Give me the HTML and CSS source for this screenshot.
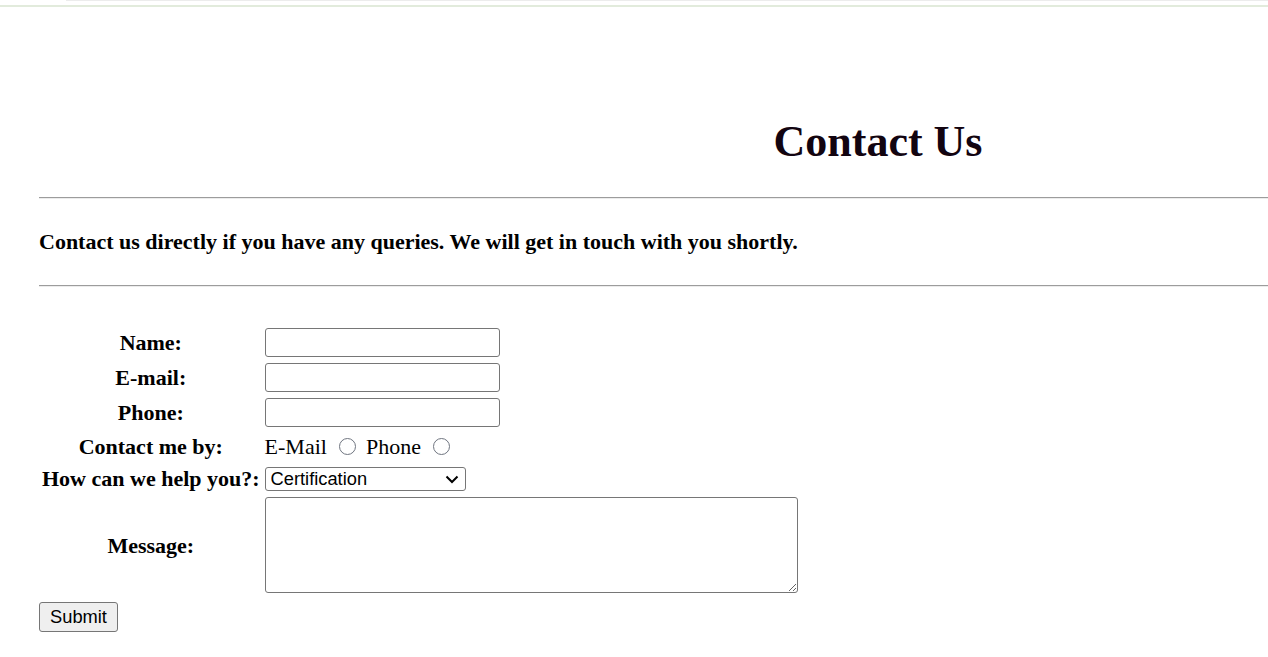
FILE: index.html
```html
<!DOCTYPE html>
<html lang="en">
<head>
<meta charset="utf-8">
<title>Contact Us</title>
<link rel="stylesheet" href="styles.css">
</head>
<body>
<div class="chrome-top"><div class="chrome-bar"></div></div>
<div class="chrome-line"></div>
<main class="page">
  <h1 class="title">Contact Us</h1>
  <hr class="rule">
  <p class="intro">Contact us directly if you have any queries. We will get in touch with you shortly.</p>
  <hr class="rule">
  <form class="contact-form">
    <table class="form-table">
      <tr>
        <th class="label">Name:</th>
        <td class="field"><input class="text-input" type="text"></td>
      </tr>
      <tr>
        <th class="label">E-mail:</th>
        <td class="field"><input class="text-input" type="text"></td>
      </tr>
      <tr>
        <th class="label">Phone:</th>
        <td class="field"><input class="text-input" type="text"></td>
      </tr>
      <tr class="row-radios">
        <th class="label">Contact me by:</th>
        <td class="field radios">E-Mail <input class="radio" type="radio" name="by"> Phone <input class="radio" type="radio" name="by"></td>
      </tr>
      <tr class="row-select">
        <th class="label">How can we help you?:</th>
        <td class="field">
          <div class="select-wrap">
            <select class="select"><option>Certification</option></select>
            <svg class="chevron" width="14" height="9" viewBox="0 0 14 9" aria-hidden="true"><path d="M1.5 1.5 L7 7 L12.5 1.5" fill="none" stroke="#000" stroke-width="2"/></svg>
          </div>
        </td>
      </tr>
      <tr>
        <th class="label">Message:</th>
        <td class="field"><textarea class="message"></textarea></td>
      </tr>
    </table>
    <button class="submit" type="button">Submit</button>
  </form>
</main>
</body>
</html>
```

FILE: styles.css
```css
html, body {
  margin: 0;
  padding: 0;
  overflow: hidden;
  background: #ffffff;
}

body {
  font-family: "Liberation Serif", "Times New Roman", serif;
  font-size: 22px;
  color: #000;
}

.chrome-top {
  height: 5px;
  padding-left: 66px;
}

.chrome-bar {
  height: 1px;
  background: #ececec;
}

.chrome-line {
  height: 2px;
  background: #e2ebdc;
}

.page {
  width: 1678px;
  margin-left: 39px;
}

.title {
  margin: 110px 0 0;
  font-size: 44px;
  line-height: 50px;
  font-weight: bold;
  text-align: center;
  color: #120410;
}

.rule {
  margin: 30px 0 0;
  border: 0;
  border-top: 1px solid #9c9c9c;
  border-bottom: 1px solid #ececec;
  height: 0;
}

.intro {
  margin: 30px 0 0;
  font-weight: bold;
  font-size: 22px;
  line-height: 26px;
}

.contact-form {
  margin-top: 36px;
}

.form-table {
  border-collapse: separate;
  border-spacing: 3px 4px;
  margin-left: -1px;
}

.label {
  padding: 1px;
  text-align: center;
  font-weight: bold;
  vertical-align: middle;
  line-height: 25px;
}

.field {
  padding: 1px;
  vertical-align: middle;
  line-height: 25px;
}

.row-radios .label,
.row-radios .field {
  line-height: 27px;
}

.text-input {
  display: block;
  box-sizing: border-box;
  width: 235px;
  height: 29px;
  margin: 0;
  border: 1px solid #767676;
  border-radius: 3px;
  font: 18px "Liberation Sans", Arial, sans-serif;
}

.radios {
  font-weight: normal;
}

.radio {
  appearance: none;
  -webkit-appearance: none;
  box-sizing: border-box;
  width: 17px;
  height: 17px;
  margin: 0 4px 0 7px;
  border: 1px solid #6f7580;
  border-radius: 50%;
  background: #fff;
  vertical-align: -1px;
}

.select-wrap {
  position: relative;
  width: 201px;
  height: 24px;
}

.select {
  appearance: none;
  -webkit-appearance: none;
  display: block;
  box-sizing: border-box;
  width: 201px;
  height: 24px;
  margin: 0;
  padding: 0 24px 0 5px;
  font: 18.3px "Liberation Sans", Arial, sans-serif;
  line-height: 22px;
  color: #000;
  border: 1px solid #767676;
  border-radius: 3px;
  background: #fff;
}

.chevron {
  position: absolute;
  right: 7px;
  top: 8px;
  pointer-events: none;
}

.message {
  box-sizing: border-box;
  display: block;
  width: 533px;
  height: 96px;
  margin: 0;
  border: 1px solid #767676;
  border-radius: 3px;
  font: 18px "Liberation Mono", monospace;
}

.submit {
  display: block;
  box-sizing: border-box;
  width: 79px;
  height: 30px;
  margin: 4px 0 0;
  padding: 0;
  font: 18.3px "Liberation Sans", Arial, sans-serif;
  color: #000;
  background: #efefef;
  border: 1px solid #767676;
  border-radius: 3px;
}
```
